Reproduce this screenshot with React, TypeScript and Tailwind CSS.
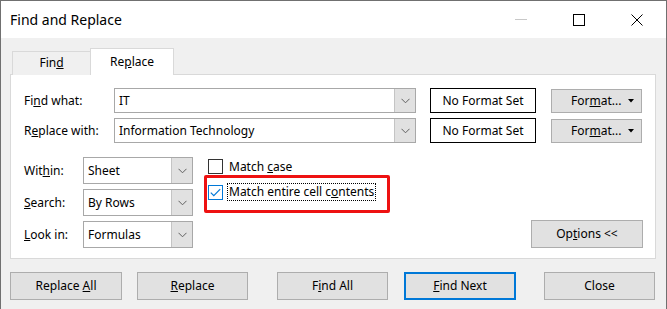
const font = { fontFamily: '"Noto Sans", "Open Sans", sans-serif' }

function Chevron() {
  return (
    <svg width="9" height="6" viewBox="0 0 9 6" className="block">
      <path d="M0.5 0.8 L4.5 4.8 L8.5 0.8" fill="none" stroke="#606060" strokeWidth="1" />
    </svg>
  )
}

function Combo({ value, w, h }: { value: string; w: string; h: string }) {
  return (
    <div className={`${w} ${h} flex border border-[#a8a8a8] bg-white`}>
      <div className="flex-1 flex items-center pl-[4px] text-black">{value}</div>
      <div className="w-[21px] flex items-center justify-center bg-[#e1e1e1] border-l border-[#c4c4c4]">
        <Chevron />
      </div>
    </div>
  )
}

function Btn({ children, w, primary }: { children: React.ReactNode; w: string; primary?: boolean }) {
  return (
    <div
      className={`${w} h-[28px] flex items-center justify-center bg-[#e1e1e1] ${
        primary ? 'border-2 border-[#0078d7]' : 'border border-[#adadad]'
      }`}
    >
      {children}
    </div>
  )
}

function FormatBtn() {
  return (
    <div className="w-[91px] h-[24px] flex items-center bg-[#e1e1e1] border border-[#adadad] pl-[19px]">
      <span>
        For<u>m</u>at...
      </span>
      <svg width="6" height="4" viewBox="0 0 6 4" className="ml-auto mr-[7px]">
        <path d="M0 0 L6 0 L3 3.5 Z" fill="#000" />
      </svg>
    </div>
  )
}

export default function App() {
  return (
    <div
      className="w-[667px] h-[309px] overflow-hidden bg-[#f0f0f0] border-l border-t border-r border-[#707070] text-[12px] text-black"
      style={font}
    >
      {/* Title bar */}
      <div className="h-[37px] bg-white flex items-center">
        <span className="ml-[9px] text-[14px] text-black">Find and Replace</span>
        <div className="ml-auto w-[12px] h-px bg-[#c8c8c8] mr-[46px]" />
        <div className="w-[12px] h-[12px] border border-black mr-[46px]" />
        <svg width="12" height="12" viewBox="0 0 12 12" className="mr-[23px]">
          <path d="M0.5 0.5 L11.5 11.5 M11.5 0.5 L0.5 11.5" stroke="#000" strokeWidth="1" />
        </svg>
      </div>

      {/* Tabs */}
      <div className="mt-[10px] flex items-end pl-[11px] relative z-10">
        <div className="w-[78px] h-[24px] mb-[-1px] flex items-center justify-center border-t border-l border-[#d9d9d9] bg-[#f0f0f0] pb-[1px]">
          <span>
            Fin<u>d</u>
          </span>
        </div>
        <div className="w-[84px] h-[27px] mb-[-1px] flex items-center justify-center border-t border-l border-r border-[#d9d9d9] bg-white pb-[1px]">
          <span>
            Re<u>p</u>lace
          </span>
        </div>
      </div>

      {/* Panel */}
      <div className="ml-[9px] w-[646px] bg-white border border-[#d9d9d9] pt-[13px] pb-[10px] pl-[13px] pr-[12px]">
        <div className="flex items-center">
          <div className="w-[90px]">
            Fi<u>n</u>d what:
          </div>
          <Combo value="IT" w="w-[302px]" h="h-[25px]" />
          <div className="ml-[14px] w-[106px] h-[25px] border border-black flex items-center justify-center">
            No Format Set
          </div>
          <div className="ml-[15px]">
            <FormatBtn />
          </div>
        </div>
        <div className="flex items-center mt-[5px]">
          <div className="w-[90px]">
            R<u>e</u>place with:
          </div>
          <Combo value="Information Technology" w="w-[302px]" h="h-[25px]" />
          <div className="ml-[14px] w-[106px] h-[25px] border border-black flex items-center justify-center">
            No Format Set
          </div>
          <div className="ml-[15px]">
            <FormatBtn />
          </div>
        </div>

        <div className="flex mt-[14px]">
          <div className="flex flex-col gap-[5px]">
            <div className="flex items-center">
              <div className="w-[59px]">
                Wit<u>h</u>in:
              </div>
              <Combo value="Sheet" w="w-[110px]" h="h-[27px]" />
            </div>
            <div className="flex items-center">
              <div className="w-[59px]">
                <u>S</u>earch:
              </div>
              <Combo value="By Rows" w="w-[110px]" h="h-[27px]" />
            </div>
            <div className="flex items-center">
              <div className="w-[59px]">
                <u>L</u>ook in:
              </div>
              <Combo value="Formulas" w="w-[110px]" h="h-[27px]" />
            </div>
          </div>

          <div className="ml-[15px] relative pt-[2px]">
            <div className="flex items-center h-[15px]">
              <div className="w-[15px] h-[15px] border border-[#333] bg-white" />
              <span className="ml-[6px]">
                Match <u>c</u>ase
              </span>
            </div>
            <div className="flex items-center h-[16px] mt-[10px]">
              <div className="w-[15px] h-[15px] border border-[#0078d7] bg-white flex items-center justify-center">
                <svg width="11" height="9" viewBox="0 0 11 9">
                  <path d="M0.8 4.6 L3.8 7.6 L10.2 1.2" fill="none" stroke="#0078d7" strokeWidth="1.2" />
                </svg>
              </div>
              <span className="ml-[4px] border border-dotted border-black px-[1px] leading-[16px]">
                Match entire cell c<u>o</u>ntents
              </span>
            </div>
            <div className="absolute left-[-4px] top-[18px] w-[186px] h-[38px] border-[3px] border-[#ee1111] rounded-[2px]" />
          </div>

          <div className="ml-auto self-end">
            <div className="w-[112px] h-[28px] flex items-center justify-center bg-[#e1e1e1] border border-[#adadad]">
              <span>
                Op<u>t</u>ions &lt;&lt;
              </span>
            </div>
          </div>
        </div>
      </div>

      {/* Bottom buttons */}
      <div className="flex mt-[13px] pl-[9px]">
        <Btn w="w-[112px]">
          <span>
            Replace <u>A</u>ll
          </span>
        </Btn>
        <div className="ml-[15px]">
          <Btn w="w-[111px]">
            <span>
              <u>R</u>eplace
            </span>
          </Btn>
        </div>
        <div className="ml-[29px]">
          <Btn w="w-[111px]">
            <span>
              F<u>i</u>nd All
            </span>
          </Btn>
        </div>
        <div className="ml-[16px]">
          <Btn w="w-[112px]" primary>
            <span>
              <u>F</u>ind Next
            </span>
          </Btn>
        </div>
        <div className="ml-[28px]">
          <Btn w="w-[111px]">
            <span>Close</span>
          </Btn>
        </div>
      </div>
    </div>
  )
}
